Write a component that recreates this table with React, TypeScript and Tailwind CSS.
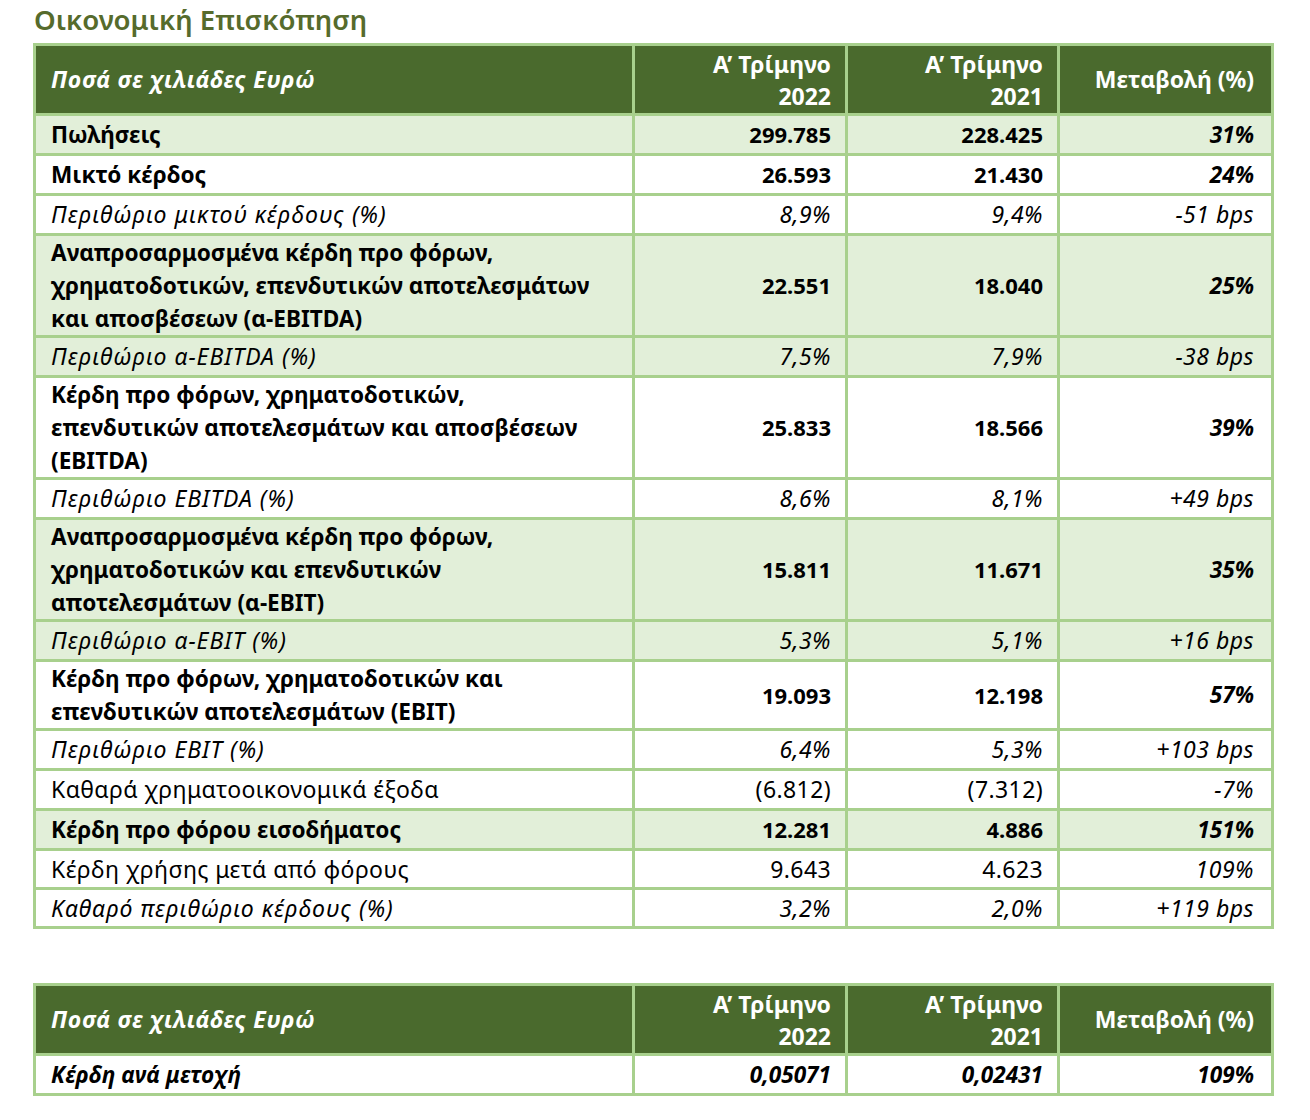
const rows: { label: string[]; a: string; b: string; c: string; kind: "bold" | "it" | "norm"; bg: boolean; h: string }[] = [
  { label: ["Πωλήσεις"], a: "299.785", b: "228.425", c: "31%", kind: "bold", bg: true, h: "h-[40px]" },
  { label: ["Μικτό κέρδος"], a: "26.593", b: "21.430", c: "24%", kind: "bold", bg: false, h: "h-[40px]" },
  { label: ["Περιθώριο μικτού κέρδους (%)"], a: "8,9%", b: "9,4%", c: "-51 bps", kind: "it", bg: false, h: "h-[40px]" },
  {
    label: ["Αναπροσαρμοσμένα κέρδη προ φόρων,", "χρηματοδοτικών, επενδυτικών αποτελεσμάτων", "και αποσβέσεων (α-EBITDA)"],
    a: "22.551", b: "18.040", c: "25%", kind: "bold", bg: true, h: "h-[102px]",
  },
  { label: ["Περιθώριο α-EBITDA (%)"], a: "7,5%", b: "7,9%", c: "-38 bps", kind: "it", bg: true, h: "h-[40px]" },
  {
    label: ["Κέρδη προ φόρων, χρηματοδοτικών,", "επενδυτικών αποτελεσμάτων και αποσβέσεων", "(EBITDA)"],
    a: "25.833", b: "18.566", c: "39%", kind: "bold", bg: false, h: "h-[102px]",
  },
  { label: ["Περιθώριο EBITDA (%)"], a: "8,6%", b: "8,1%", c: "+49 bps", kind: "it", bg: false, h: "h-[40px]" },
  {
    label: ["Αναπροσαρμοσμένα κέρδη προ φόρων,", "χρηματοδοτικών και επενδυτικών", "αποτελεσμάτων (α-EBIT)"],
    a: "15.811", b: "11.671", c: "35%", kind: "bold", bg: true, h: "h-[102px]",
  },
  { label: ["Περιθώριο α-EBIT (%)"], a: "5,3%", b: "5,1%", c: "+16 bps", kind: "it", bg: true, h: "h-[40px]" },
  {
    label: ["Κέρδη προ φόρων, χρηματοδοτικών και", "επενδυτικών αποτελεσμάτων (EBIT)"],
    a: "19.093", b: "12.198", c: "57%", kind: "bold", bg: false, h: "h-[69px]",
  },
  { label: ["Περιθώριο EBIT (%)"], a: "6,4%", b: "5,3%", c: "+103 bps", kind: "it", bg: false, h: "h-[40px]" },
  { label: ["Καθαρά χρηματοοικονομικά έξοδα"], a: "(6.812)", b: "(7.312)", c: "-7%", kind: "norm", bg: false, h: "h-[40px]" },
  { label: ["Κέρδη προ φόρου εισοδήματος"], a: "12.281", b: "4.886", c: "151%", kind: "bold", bg: true, h: "h-[40px]" },
  { label: ["Κέρδη χρήσης μετά από φόρους"], a: "9.643", b: "4.623", c: "109%", kind: "norm", bg: false, h: "h-[39px]" },
  { label: ["Καθαρό περιθώριο κέρδους (%)"], a: "3,2%", b: "2,0%", c: "+119 bps", kind: "it", bg: false, h: "h-[39px]" },
];

const cell = "border-[3px] border-[#a8d08d] px-[14px] py-0 align-middle";
const last = "border-[3px] border-[#a8d08d] pl-[14px] pr-[17px] py-0 align-middle";

const Header = () => (
  <thead>
    <tr className="h-[70px] bg-[#4a6a2d] text-white font-bold text-[23px]">
      <th className={`${cell} text-left italic pl-[15px] tracking-[0.6px]`}>Ποσά σε χιλιάδες Ευρώ</th>
      <th className={`${cell} text-right leading-[32px]`}>Α’ Τρίμηνο<br />2022</th>
      <th className={`${cell} text-right leading-[32px]`}>Α’ Τρίμηνο<br />2021</th>
      <th className={`${last} text-right`}>Μεταβολή (%)</th>
    </tr>
  </thead>
);

const labelLook = (kind: "bold" | "it" | "norm") =>
  kind === "bold"
    ? "font-bold text-[22.6px]"
    : kind === "it"
    ? "italic text-[23px] tracking-[1px]"
    : "text-[23px] tracking-[0.4px]";

const numLook = (kind: "bold" | "it" | "norm") =>
  kind === "bold" ? "font-bold text-[22px]" : kind === "it" ? "italic text-[23px] tracking-[0.5px]" : "text-[23px] tracking-[0.4px]";

export default function App() {
  return (
    <div className="w-[1310px] min-h-[1120px] bg-white text-black font-['Noto_Sans',sans-serif] text-[22px]">
      <h1 className="pl-[34px] pt-[1px] text-[27.6px] leading-[36px] font-semibold text-[#566b2c]">Οικονομική Επισκόπηση</h1>
      <div className="pl-[33px] pt-[6px]">
        <table className="border-collapse w-[1238px] table-fixed">
          <colgroup>
            <col className="w-[599px]" />
            <col className="w-[213px]" />
            <col className="w-[212px]" />
            <col className="w-[214px]" />
          </colgroup>
          <Header />
          <tbody>
            {rows.map((r, i) => {
              const cStyle = r.kind === "bold" ? "font-bold italic text-[22.6px]" : "italic text-[23px] tracking-[0.5px]";
              return (
                <tr key={i} className={`${r.h} ${r.bg ? "bg-[#e2efd9]" : "bg-white"}`}>
                  <td className={`${cell} pl-[15px] leading-[33px] ${labelLook(r.kind)}`}>
                    {r.label.map((l, j) => (
                      <div key={j}>{l}</div>
                    ))}
                  </td>
                  <td className={`${cell} text-right ${numLook(r.kind)}`}>{r.a}</td>
                  <td className={`${cell} text-right ${numLook(r.kind)}`}>{r.b}</td>
                  <td className={`${last} text-right ${cStyle}`}>{r.c}</td>
                </tr>
              );
            })}
          </tbody>
        </table>
        <table className="border-collapse w-[1238px] table-fixed mt-[54px]">
          <colgroup>
            <col className="w-[599px]" />
            <col className="w-[213px]" />
            <col className="w-[212px]" />
            <col className="w-[214px]" />
          </colgroup>
          <Header />
          <tbody>
            <tr className="h-[40px] bg-white font-bold italic text-[22.6px]">
              <td className={`${cell} pl-[15px]`}>Κέρδη ανά μετοχή</td>
              <td className={`${cell} text-right`}>0,05071</td>
              <td className={`${cell} text-right`}>0,02431</td>
              <td className={`${last} text-right`}>109%</td>
            </tr>
          </tbody>
        </table>
      </div>
    </div>
  );
}
